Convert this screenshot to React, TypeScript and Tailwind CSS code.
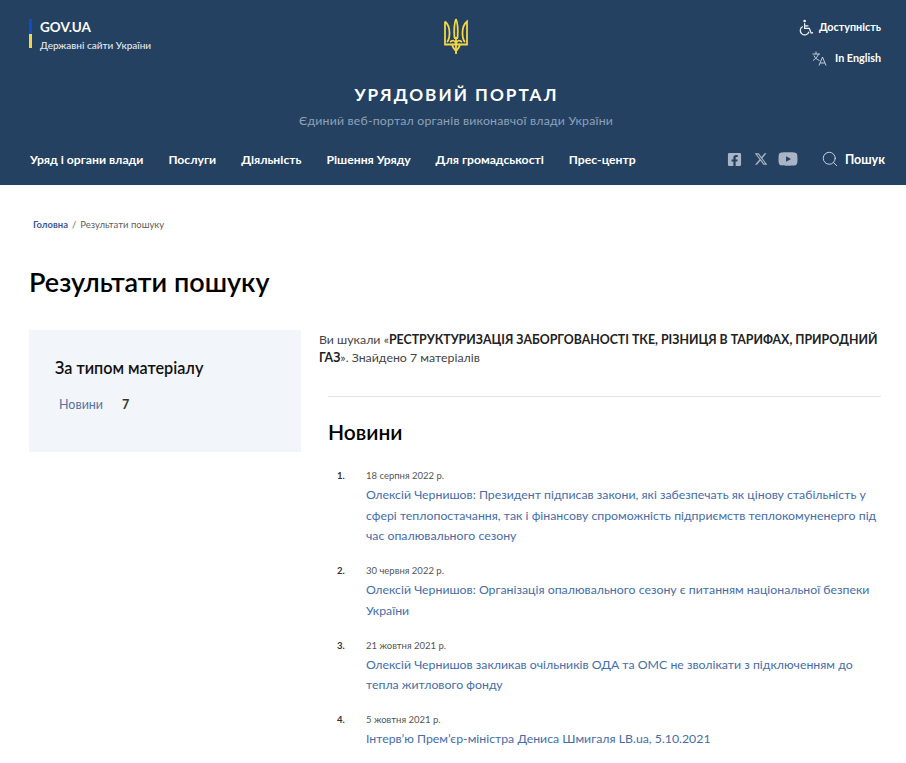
import { FaFacebookSquare, FaYoutube } from "react-icons/fa";
import { FaXTwitter } from "react-icons/fa6";
import { Search } from "lucide-react";

const nav = ["Уряд і органи влади", "Послуги", "Діяльність", "Рішення Уряду", "Для громадськості", "Прес-центр"];
const items = [
  { d: "18 серпня 2022 р.", t: "Олексій Чернишов: Президент підписав закони, які забезпечать як цінову стабільність у сфері теплопостачання, так і фінансову спроможність підприємств теплокомуненерго під час опалювального сезону" },
  { d: "30 червня 2022 р.", t: "Олексій Чернишов: Організація опалювального сезону є питанням національної безпеки України" },
  { d: "21 жовтня 2021 р.", t: "Олексій Чернишов закликав очільників ОДА та ОМС не зволікати з підключенням до тепла житлового фонду" },
  { d: "5 жовтня 2021 р.", t: "Інтерв’ю Прем’єр-міністра Дениса Шмигаля LB.ua, 5.10.2021" },
];

function Trident() {
  return (
    <svg width="24" height="37" viewBox="0 0 24 37" fill="none" stroke="#f3d644" strokeWidth="1.8">
      <path d="M1 3.5 C4 6 5.5 9 5.5 15 C5.5 19 5 22 3 24 M1 3.5 V26.5 H8 C8.5 29 10 31 12 33 C14 31 15.5 29 16 26.5 H23 V3.5 C20 6 18.5 9 18.5 15 C18.5 19 19 22 21 24" />
      <path d="M12 1 C10 6 10 14 10.5 20 M12 1 C14 6 14 14 13.5 20 M12 20 V36 M6 24 C9 22 11 22 12 26 C13 22 15 22 18 24 M8 26.5 H16 M10 20 H14" />
    </svg>
  );
}

function Wheelchair() {
  return (
    <svg width="15" height="17" viewBox="0 0 16 17" fill="none" stroke="#f2f5f8" strokeWidth="1.3">
      <circle cx="6" cy="1.6" r="1.4" fill="#f2f5f8" stroke="none" />
      <path d="M6 4 V9.5 H11 L13 14.5 L15 14" />
      <path d="M6 6.8 H10" />
      <path d="M4 7.5 A4.7 4.7 0 1 0 10.6 13" />
    </svg>
  );
}

function Translate() {
  return (
    <svg width="15" height="15" viewBox="0 0 15 15" fill="none" stroke="#d5dce4" strokeWidth="0.9">
      <path d="M0.5 3 H8 M4 0.5 V3 M6.5 3 C5.5 6 3.5 8 1 9.5 M2 4.5 C3 7 5 8.5 7.5 9.5" />
      <path d="M7 14.5 L10.5 6 L14 14.5 M8.2 12 H12.8" />
    </svg>
  );
}

export default function App() {
  return (
    <div className="h-[763px] overflow-hidden bg-white text-[#2b2b2b] font-['Lato','Noto_Sans',sans-serif]">
      <header className="h-[185px] bg-[#244161] text-white pl-[29px] pr-[30px] flex flex-col">
        <div className="flex justify-between h-[80px]">
          <div className="w-[280px] flex pt-[19px]">
            <div className="flex flex-col w-[3px] h-[29px]">
              <div className="h-[15px] bg-[#0a4fc4]" />
              <div className="h-[14px] bg-[#f3d644]" />
            </div>
            <div className="ml-[8px]">
              <div className="text-[13.5px] leading-[16px] font-bold">GOV.UA</div>
              <div className="text-[10px] leading-[12px] mt-[4px] font-medium text-[#e4e9ef]">Державні сайти України</div>
            </div>
          </div>
          <div className="pt-[18px] ml-[1px]"><Trident /></div>
          <div className="w-[280px] flex flex-col items-end pt-[19px] mr-[-5px]">
            <div className="flex items-center gap-[5px] h-[17px] text-[10.8px] font-bold"><Wheelchair />Доступність</div>
            <div className="flex items-center gap-[8px] h-[17px] mt-[14px] text-[10.8px] font-bold"><Translate />In English</div>
          </div>
        </div>
        <div className="ml-[8px] text-center text-[17.2px] leading-[26px] font-bold uppercase tracking-[2px] mt-[2px]">Урядовий портал</div>
        <div className="ml-[7px] text-center text-[12.3px] leading-[16px] tracking-[0.2px] mt-[5px] text-[#8fa2ba]">Єдиний веб-портал органів виконавчої влади України</div>
        <div className="flex items-center justify-between mt-[20px] h-[22px]">
          <nav className="flex gap-[25px] ml-[1px] text-[12.2px] font-bold">
            {nav.map((n) => <span key={n}>{n}</span>)}
          </nav>
          <div className="flex items-center mr-[-9px]">
            <div className="flex items-center text-[#a9b5c4] mb-[2px]">
              <FaFacebookSquare size={15} />
              <FaXTwitter size={14} className="ml-[12px]" />
              <FaYoutube size={20} className="ml-[10px]" />
            </div>
            <Search size={18} strokeWidth={1.2} className="ml-[23px] mb-[3px] text-[#d5dce4]" />
            <span className="ml-[6px] text-[12.5px] font-bold">Пошук</span>
          </div>
        </div>
      </header>

      <main className="pl-[29px] pr-[30px]">
        <div className="flex items-center pt-[33px] pl-[4px] text-[9.5px] leading-[14px]">
          <span className="font-bold text-[#3e5a92]">Головна</span>
          <span className="mx-[4px] text-[#666]">/</span>
          <span className="text-[#5e5e5e]">Результати пошуку</span>
        </div>
        <h1 className="mt-[32px] text-[27px] leading-[36px] font-semibold text-black">Результати пошуку</h1>
        <div className="flex mt-[30px]">
          <aside className="w-[272px] h-[122px] bg-[#f2f5f9] pl-[26px] pt-[27px] shrink-0">
            <h3 className="text-[16.2px] leading-[22px] font-semibold text-[#111]">За типом матеріалу</h3>
            <div className="flex mt-[16px] ml-[4px] text-[12.5px] leading-[20px]">
              <span className="text-[#56729f]">Новини</span>
              <span className="ml-[19px] font-bold text-[#333]">7</span>
            </div>
          </aside>
          <div className="ml-[18px] flex-1 min-w-0">
            <p className="text-[12.35px] leading-[18px] text-[#444] mr-[-5px] mt-[1px]">
              Ви шукали «<b className="font-bold text-[#222]">РЕСТРУКТУРИЗАЦІЯ ЗАБОРГОВАНОСТІ ТКЕ, РІЗНИЦЯ В ТАРИФАХ, ПРИРОДНИЙ ГАЗ</b>». Знайдено 7 матеріалів
            </p>
            <div className="ml-[9px] mr-[-5px]">
              <div className="mt-[29px] border-t border-[#e4e6e8]" />
              <h2 className="mt-[22px] text-[21px] leading-[26px] font-semibold text-black">Новини</h2>
              <ol className="mt-[24px]">
                {items.map((it, i) => (
                  <li key={i} className="flex mb-[17.5px]">
                    <span className="w-[38px] pl-[9px] text-[9.5px] leading-[14px] font-bold text-[#333] shrink-0">{i + 1}.</span>
                    <div>
                      <div className="text-[9.5px] leading-[14px] text-[#555]">{it.d}</div>
                      <a className="block text-[12.3px] leading-[20.5px] mt-[2px] text-[#466da8]">{it.t}</a>
                    </div>
                  </li>
                ))}
              </ol>
            </div>
          </div>
        </div>
      </main>
    </div>
  );
}
